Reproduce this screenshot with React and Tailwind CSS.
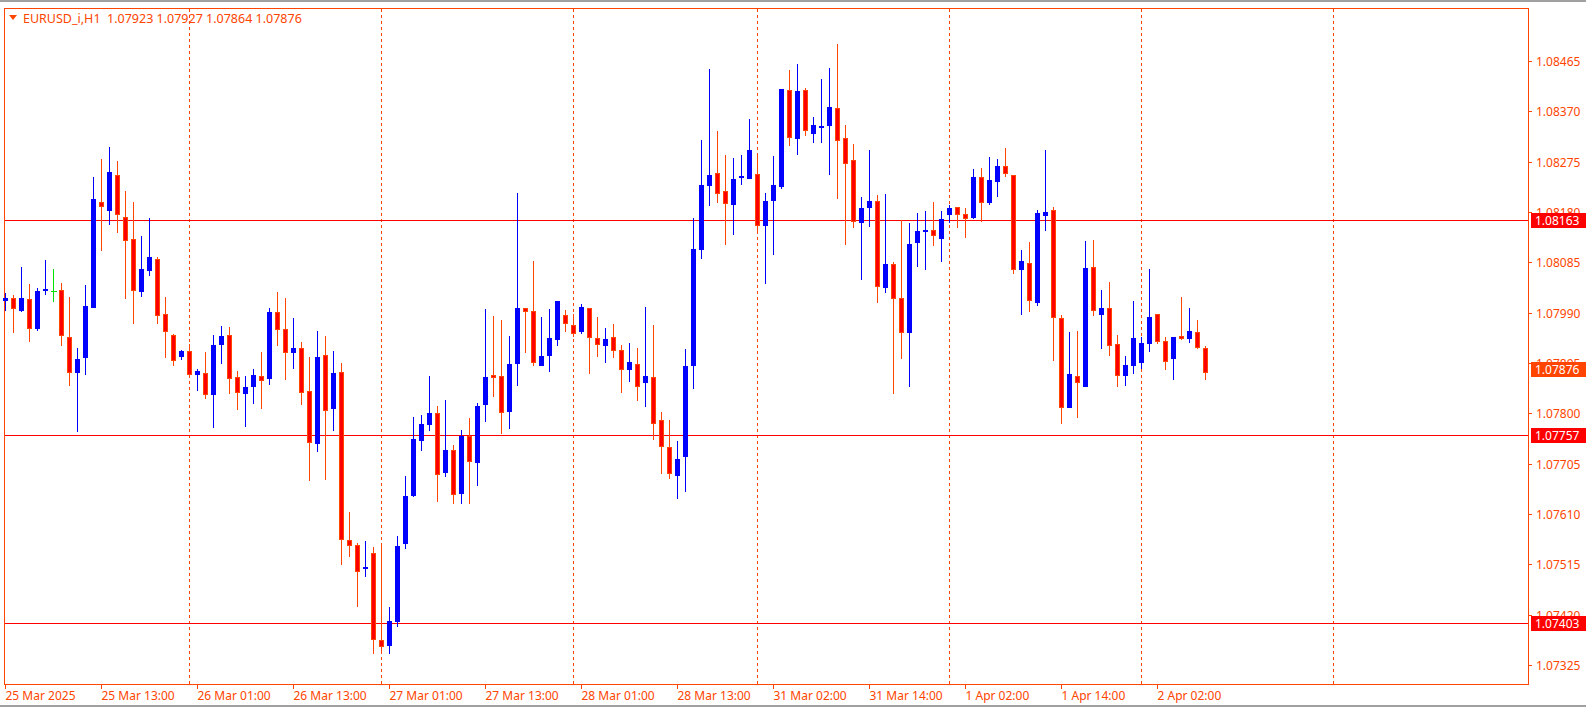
import React from 'react';

// candle data in screen pixels: open, close, high, low
const RAW = `297,294,289,307|294,305,291,329|307,294,263,308|295,325,280,338|325,287,284,327|287,285,256,291|287,287,265,298|286,332,279,342|333,369,293,382|369,355,344,428|354,302,281,371|304,195,173,304|198,203,155,247|207,168,143,221|171,211,157,229|213,237,187,295|235,287,198,320|288,265,232,293|267,253,214,272|255,312,253,320|310,328,293,354|331,357,330,362|353,347,346,356|347,371,340,371|371,367,365,387|369,391,348,395|391,341,331,424|341,332,322,360|331,375,323,390|373,389,367,406|390,383,372,423|383,371,365,400|372,377,348,405|375,308,304,381|308,326,288,342|325,349,294,376|349,344,314,365|344,389,338,401|387,439,353,477|440,353,327,448|351,407,332,476|405,369,347,427|368,536,359,561|536,542,508,553|541,568,539,603|565,563,537,573|549,636,543,650|636,643,540,650|642,617,603,650|618,542,532,623|540,492,472,545|492,435,413,493|437,420,411,447|421,409,372,427|409,471,402,498|469,446,396,473|446,491,441,500|490,432,426,500|432,458,414,500|459,402,399,482|401,373,305,418|371,374,312,393|372,409,316,430|408,360,332,425|360,304,189,382|304,308,304,349|307,359,257,362|362,352,313,362|352,334,305,368|336,297,297,342|311,320,306,328|321,330,310,333|328,303,300,330|304,334,304,370|334,341,313,353|342,335,324,359|333,347,320,354|346,366,341,389|366,358,339,378|360,383,344,397|379,372,303,403|373,420,321,436|416,443,408,470|443,470,416,475|472,455,437,495|453,362,345,488|362,245,214,385|246,181,136,255|182,171,65,202|169,190,127,199|187,200,151,241|201,175,154,231|174,172,151,181|175,146,115,175|170,222,152,228|222,197,189,280|197,181,152,251|183,85,85,185|86,134,66,142|135,87,60,151|86,127,84,132|130,121,113,139|124,122,75,139|122,103,64,171|104,137,40,195|134,160,121,241|156,218,140,224|219,204,193,276|204,197,146,223|197,283,191,299|284,260,190,289|260,295,258,390|294,329,216,355|329,240,219,383|239,227,209,263|228,226,207,266|226,232,198,242|235,215,207,258|211,204,201,219|203,211,203,224|210,215,204,234|214,173,165,215|173,199,164,218|199,176,153,201|178,162,155,193|162,170,144,173|171,266,171,270|266,257,246,311|259,297,238,308|299,209,206,302|212,208,146,227|206,314,203,357|314,404,311,420|404,370,328,404|372,379,327,414|383,264,237,383|263,307,236,312|311,304,286,345|304,342,278,352|340,372,331,383|372,361,352,382|362,334,297,370|359,339,333,365|340,313,265,348|310,338,310,340|337,358,333,366|355,333,333,376|332,335,293,336|335,327,304,339|328,344,316,345|344,369,342,376`;

const candles = RAW.split('|').map((s) => s.split(',').map(Number));

const ORANGE = '#ff4500';

const priceY = (p) => 57 + ((1.08465 - p) * 100000 / 95) * 50.33;

const ticks = ['1.08465', '1.08370', '1.08275', '1.08180', '1.08085', '1.07990', '1.07895', '1.07800', '1.07705', '1.07610', '1.07515', '1.07420', '1.07325'];

const dates = ['25 Mar 2025', '25 Mar 13:00', '26 Mar 01:00', '26 Mar 13:00', '27 Mar 01:00', '27 Mar 13:00', '28 Mar 01:00', '28 Mar 13:00', '31 Mar 02:00', '31 Mar 14:00', '1 Apr 02:00', '1 Apr 14:00', '2 Apr 02:00'];

const levels = [
  { p: '1.08163', y: 216.5, bg: '#ff0000' },
  { p: '1.07757', y: 431.5, bg: '#ff0000' },
  { p: '1.07403', y: 619.5, bg: '#ff0000' },
];

const separators = [189, 381, 573, 757, 949, 1141, 1333];

export default function App() {
  return (
    <div className="w-[1586px] h-[707px] bg-white border-t-2 border-b-2 border-[#a0a0a0] overflow-hidden font-['Liberation_Sans',Arial,sans-serif]">
      <svg width="1586" height="703" viewBox="0 -2 1586 703" shapeRendering="crispEdges">
        {/* frame */}
        <rect x="4.5" y="4.5" width="1524" height="676" fill="none" stroke={ORANGE} />

        {/* day separators */}
        {separators.map((x) => (
          <line key={x} x1={x + 0.5} y1="5" x2={x + 0.5} y2="680" stroke={ORANGE} strokeDasharray="3 3" />
        ))}

        {/* horizontal levels */}
        {levels.map((l) => (
          <line key={l.p} x1="5" y1={l.y} x2="1528" y2={l.y} stroke="#ff0000" />
        ))}

        {/* candles */}
        {candles.map(([o, c, h, l], k) => {
          const x = 5 + 8 * k + 0.5;
          const bull = c < o;
          const top = Math.min(o, c);
          const hgt = Math.max(Math.abs(o - c), 2);
          if (k === 6) {
            return (
              <g key={k} stroke="#00e000">
                <line x1={x} y1={h} x2={x} y2={l} />
                <line x1={x - 3} y1={o + 0.5} x2={x + 3} y2={o + 0.5} />
              </g>
            );
          }
          return bull ? (
            <g key={k}>
              <line x1={x} y1={h} x2={x} y2={l} stroke="#0000ff" />
              <rect x={x - 2.5} y={top} width="5" height={hgt} fill="#0000ff" />
            </g>
          ) : (
            <g key={k}>
              <line x1={x} y1={h} x2={x} y2={l} stroke={ORANGE} />
              <rect x={x - 2} y={top + 0.5} width="4" height={hgt - 1 > 1 ? hgt - 1 : 1} fill="#ff0000" stroke={ORANGE} />
            </g>
          );
        })}

        {/* price axis */}
        {ticks.map((t) => {
          const y = Math.round(priceY(parseFloat(t)));
          return (
            <g key={t}>
              <line x1="1529" y1={y + 0.5} x2="1532" y2={y + 0.5} stroke={ORANGE} />
              <text x="1536" y={y + 4.5} fontSize="12" fill={ORANGE}>{t}</text>
            </g>
          );
        })}

        {levels.map((l) => (
          <g key={l.p}>
            <rect x="1531" y={l.y - 7.5} width="55" height="15" fill={l.bg} />
            <text x="1535" y={l.y + 4.5} fontSize="12" fill="#ffffff">{l.p}</text>
          </g>
        ))}
        <rect x="1531" y="358" width="55" height="15" fill={ORANGE} />
        <text x="1535" y="370" fontSize="12" fill="#ffffff">1.07876</text>

        {/* time axis */}
        {dates.map((d, i) => {
          const x = 5 + 96 * i;
          return (
            <g key={d}>
              <line x1={x + 0.5} y1="681" x2={x + 0.5} y2="685" stroke={ORANGE} />
              <text x={x + 0.5} y="696" fontSize="12" fill={ORANGE}>{d}</text>
            </g>
          );
        })}

        {/* header */}
        <polygon points="9,11 17,11 13,16" fill={ORANGE} shapeRendering="auto" />
        <text x="23" y="19" fontSize="12.5" fill={ORANGE} xmlSpace="preserve">{'EURUSD_i,H1  1.07923 1.07927 1.07864 1.07876'}</text>
      </svg>
    </div>
  );
}
